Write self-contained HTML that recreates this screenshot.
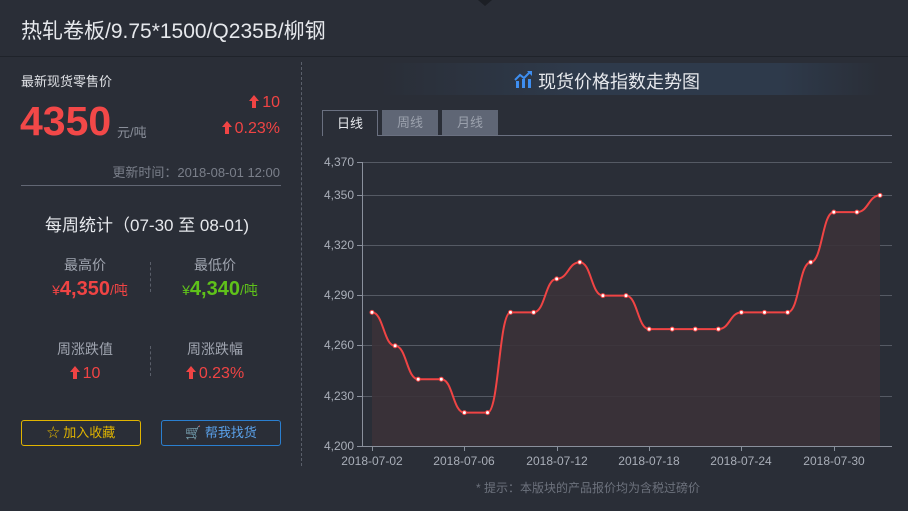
<!DOCTYPE html>
<html><head><meta charset="utf-8"><style>
*{margin:0;padding:0;box-sizing:border-box}
body{width:908px;height:511px;background:#2a2e37;font-family:"Liberation Sans","Noto Sans CJK SC",sans-serif;position:relative;overflow:hidden;color:#fff}
.abs{position:absolute}
.red{color:#f04444}
.ar{display:inline-block;width:10px;height:13px;margin-right:3px;vertical-align:-1px}
</style></head><body>
<div class="abs" style="left:0;top:0;width:908px;height:57px;border-bottom:1px solid #1f232a;background:#2a2e37"></div>
<div class="abs" style="left:478px;top:0;width:0;height:0;border-left:7px solid transparent;border-right:7px solid transparent;border-top:6px solid #1c1f25"></div>
<div class="abs" style="left:21px;top:15px;font-size:21px;color:#e6e8ec">热轧卷板/9.75*1500/Q235B/柳钢</div>

<div class="abs" style="left:301px;top:62px;height:404px;border-left:1px dashed #5a5f6a"></div>

<div class="abs" style="left:21px;top:71px;font-size:13px;color:#e0e2e6">最新现货零售价</div>
<div class="abs red" style="left:20px;top:98px;font-size:41px;font-weight:bold;line-height:46px;color:#f24848">4350</div>
<div class="abs" style="left:117px;top:122px;font-size:13px;color:#8a8f9a">元/吨</div>
<div class="abs red" style="left:200px;top:94px;width:80px;text-align:right;font-size:16px"><svg class="ar" viewBox="0 0 10 13"><path d="M5 0 L10 6 L7 6 L7 13 L3 13 L3 6 L0 6 Z" fill="#f04444"/></svg>10</div>
<div class="abs red" style="left:190px;top:120px;width:90px;text-align:right;font-size:16px"><svg class="ar" viewBox="0 0 10 13"><path d="M5 0 L10 6 L7 6 L7 13 L3 13 L3 6 L0 6 Z" fill="#f04444"/></svg>0.23%</div>
<div class="abs" style="left:80px;top:162px;width:200px;text-align:right;font-size:13px;color:#7a7f8a">更新时间：2018-08-01 12:00</div>
<div class="abs" style="left:21px;top:185px;width:260px;border-top:1px solid #626774"></div>

<div class="abs" style="left:45px;top:211px;font-size:17px;color:#e6e8ec">每周统计（07-30 至 08-01)</div>
<div class="abs" style="left:30px;top:255px;width:110px;text-align:center;font-size:14px;color:#a0a5b0">最高价</div>
<div class="abs" style="left:160px;top:255px;width:110px;text-align:center;font-size:14px;color:#a0a5b0">最低价</div>
<div class="abs red" style="left:30px;top:278px;width:120px;text-align:center;font-size:20px;font-weight:bold"><span style="font-size:14px;font-weight:normal">¥</span>4,350<span style="font-size:14px;font-weight:normal">/吨</span></div>
<div class="abs" style="left:160px;top:278px;width:120px;text-align:center;font-size:20px;font-weight:bold;color:#5fc21a"><span style="font-size:14px;font-weight:normal">¥</span>4,340<span style="font-size:14px;font-weight:normal">/吨</span></div>
<div class="abs" style="left:150px;top:262px;height:30px;border-left:1px dashed #5a5f6a"></div>
<div class="abs" style="left:30px;top:339px;width:110px;text-align:center;font-size:14px;color:#a0a5b0">周涨跌值</div>
<div class="abs" style="left:160px;top:339px;width:110px;text-align:center;font-size:14px;color:#a0a5b0">周涨跌幅</div>
<div class="abs red" style="left:30px;top:365px;width:110px;text-align:center;font-size:16px"><svg class="ar" viewBox="0 0 10 13"><path d="M5 0 L10 6 L7 6 L7 13 L3 13 L3 6 L0 6 Z" fill="#f04444"/></svg>10</div>
<div class="abs red" style="left:160px;top:365px;width:110px;text-align:center;font-size:16px"><svg class="ar" viewBox="0 0 10 13"><path d="M5 0 L10 6 L7 6 L7 13 L3 13 L3 6 L0 6 Z" fill="#f04444"/></svg>0.23%</div>
<div class="abs" style="left:150px;top:346px;height:30px;border-left:1px dashed #5a5f6a"></div>
<div class="abs" style="left:21px;top:420px;width:120px;height:26px;border:1px solid #e0b400;border-radius:3px;color:#e0b400;font-size:13px;text-align:center;line-height:24px">☆ 加入收藏</div>
<div class="abs" style="left:161px;top:420px;width:120px;height:26px;border:1px solid #2a7fd0;border-radius:3px;color:#5aa0e8;font-size:13px;text-align:center;line-height:24px">🛒 帮我找货</div>

<div class="abs" style="left:380px;top:63px;width:500px;height:32px;background:linear-gradient(90deg,#2a2e37,#2e3a4b 40%,#2e3a4b 80%,#2a2e37)"></div>
<svg class="abs" style="left:514px;top:70px" width="20" height="20" viewBox="0 0 20 20"><rect x="2" y="11" width="3" height="7" fill="#3e8ef0"/><rect x="8" y="9" width="3" height="9" fill="#3e8ef0"/><rect x="14" y="9" width="3" height="9" fill="#3e8ef0"/><path d="M1 10 L6 5 L10 8 L16 2" stroke="#3e8ef0" stroke-width="2" fill="none"/><path d="M13 1 L18 1 L18 6 Z" fill="#3e8ef0"/></svg>
<div class="abs" style="left:538px;top:68px;font-size:18px;color:#e6e8ec">现货价格指数走势图</div>

<div class="abs" style="left:322px;top:110px;width:56px;height:26px;border:1px solid #6a7080;border-bottom:none;background:#2a2e37;color:#e6e8ec;font-size:13px;text-align:center;line-height:25px">日线</div>
<div class="abs" style="left:382px;top:110px;width:56px;height:25px;background:#5f6675;color:#9ba1ad;font-size:13px;text-align:center;line-height:25px">周线</div>
<div class="abs" style="left:442px;top:110px;width:56px;height:25px;background:#5f6675;color:#9ba1ad;font-size:13px;text-align:center;line-height:25px">月线</div>
<div class="abs" style="left:378px;top:135px;width:514px;border-top:1px solid #6a7080"></div>

<svg class="abs" style="left:0;top:0" width="908" height="511" font-family="Liberation Sans,sans-serif" font-size="12" fill="#a9aeb8">
<g stroke="#555a64" stroke-width="1">
<line x1="362" y1="162.5" x2="892" y2="162.5"/><line x1="362" y1="195.5" x2="892" y2="195.5"/><line x1="362" y1="245.5" x2="892" y2="245.5"/><line x1="362" y1="295.5" x2="892" y2="295.5"/><line x1="362" y1="345.5" x2="892" y2="345.5"/><line x1="362" y1="396.5" x2="892" y2="396.5"/>
</g>
<path d="M372 312.4 C383.5 312.4 383.6 345.8 395.1 345.8 C406.6 345.8 406.7 379.2 418.2 379.2 C429.7 379.2 429.8 379.2 441.3 379.2 C452.8 379.2 452.9 412.6 464.4 412.6 C475.9 412.6 476 412.6 487.5 412.6 C499 412.6 499 312.4 510.5 312.4 C522 312.4 522.1 312.4 533.6 312.4 C545.1 312.4 545.2 278.9 556.7 278.9 C568.2 278.9 568.3 262.2 579.8 262.2 C591.3 262.2 591.4 295.6 602.9 295.6 C614.4 295.6 614.5 295.6 626 295.6 C637.5 295.6 637.6 329.1 649.1 329.1 C660.6 329.1 660.7 329.1 672.2 329.1 C683.7 329.1 683.8 329.1 695.3 329.1 C706.8 329.1 706.9 329.1 718.4 329.1 C729.9 329.1 729.9 312.4 741.4 312.4 C752.9 312.4 753 312.4 764.5 312.4 C776 312.4 776.1 312.4 787.6 312.4 C799.1 312.4 799.2 262.2 810.7 262.2 C822.2 262.2 822.3 212.1 833.8 212.1 C845.3 212.1 845.4 212.1 856.9 212.1 C868.4 212.1 868.5 195.4 880 195.4 L880 446 L372 446 Z" fill="#3b3239" fill-opacity="0.9"/>
<path d="M372 312.4 C383.5 312.4 383.6 345.8 395.1 345.8 C406.6 345.8 406.7 379.2 418.2 379.2 C429.7 379.2 429.8 379.2 441.3 379.2 C452.8 379.2 452.9 412.6 464.4 412.6 C475.9 412.6 476 412.6 487.5 412.6 C499 412.6 499 312.4 510.5 312.4 C522 312.4 522.1 312.4 533.6 312.4 C545.1 312.4 545.2 278.9 556.7 278.9 C568.2 278.9 568.3 262.2 579.8 262.2 C591.3 262.2 591.4 295.6 602.9 295.6 C614.4 295.6 614.5 295.6 626 295.6 C637.5 295.6 637.6 329.1 649.1 329.1 C660.6 329.1 660.7 329.1 672.2 329.1 C683.7 329.1 683.8 329.1 695.3 329.1 C706.8 329.1 706.9 329.1 718.4 329.1 C729.9 329.1 729.9 312.4 741.4 312.4 C752.9 312.4 753 312.4 764.5 312.4 C776 312.4 776.1 312.4 787.6 312.4 C799.1 312.4 799.2 262.2 810.7 262.2 C822.2 262.2 822.3 212.1 833.8 212.1 C845.3 212.1 845.4 212.1 856.9 212.1 C868.4 212.1 868.5 195.4 880 195.4" fill="none" stroke="#f04444" stroke-width="2"/>
<g fill="#fff" stroke="#f04444" stroke-width="1">
<circle cx="372" cy="312.4" r="2"/><circle cx="395.1" cy="345.8" r="2"/><circle cx="418.2" cy="379.2" r="2"/><circle cx="441.3" cy="379.2" r="2"/><circle cx="464.4" cy="412.6" r="2"/><circle cx="487.5" cy="412.6" r="2"/><circle cx="510.5" cy="312.4" r="2"/><circle cx="533.6" cy="312.4" r="2"/><circle cx="556.7" cy="278.9" r="2"/><circle cx="579.8" cy="262.2" r="2"/><circle cx="602.9" cy="295.6" r="2"/><circle cx="626" cy="295.6" r="2"/><circle cx="649.1" cy="329.1" r="2"/><circle cx="672.2" cy="329.1" r="2"/><circle cx="695.3" cy="329.1" r="2"/><circle cx="718.4" cy="329.1" r="2"/><circle cx="741.4" cy="312.4" r="2"/><circle cx="764.5" cy="312.4" r="2"/><circle cx="787.6" cy="312.4" r="2"/><circle cx="810.7" cy="262.2" r="2"/><circle cx="833.8" cy="212.1" r="2"/><circle cx="856.9" cy="212.1" r="2"/><circle cx="880" cy="195.4" r="2"/>
</g>
<g stroke="#8a909c" stroke-width="1">
<line x1="362.5" y1="162" x2="362.5" y2="446"/><line x1="362" y1="446.5" x2="892" y2="446.5"/>
<line x1="357" y1="162.5" x2="362" y2="162.5"/><line x1="357" y1="195.5" x2="362" y2="195.5"/><line x1="357" y1="245.5" x2="362" y2="245.5"/><line x1="357" y1="295.5" x2="362" y2="295.5"/><line x1="357" y1="345.5" x2="362" y2="345.5"/><line x1="357" y1="396.5" x2="362" y2="396.5"/><line x1="357" y1="446.5" x2="362" y2="446.5"/>
<line x1="372.5" y1="446" x2="372.5" y2="451"/><line x1="464.5" y1="446" x2="464.5" y2="451"/><line x1="557.5" y1="446" x2="557.5" y2="451"/><line x1="649.5" y1="446" x2="649.5" y2="451"/><line x1="741.5" y1="446" x2="741.5" y2="451"/><line x1="834.5" y1="446" x2="834.5" y2="451"/>
</g>
<g text-anchor="end"><text x="354" y="166">4,370</text><text x="354" y="199">4,350</text><text x="354" y="249">4,320</text><text x="354" y="299">4,290</text><text x="354" y="349">4,260</text><text x="354" y="400">4,230</text><text x="354" y="450">4,200</text></g>
<g text-anchor="middle"><text x="372" y="465">2018-07-02</text><text x="464" y="465">2018-07-06</text><text x="557" y="465">2018-07-12</text><text x="649" y="465">2018-07-18</text><text x="741" y="465">2018-07-24</text><text x="834" y="465">2018-07-30</text></g>
</svg>
<div class="abs" style="left:476px;top:479px;font-size:12px;color:#6d727d">* 提示：本版块的产品报价均为含税过磅价</div>
</body></html>
